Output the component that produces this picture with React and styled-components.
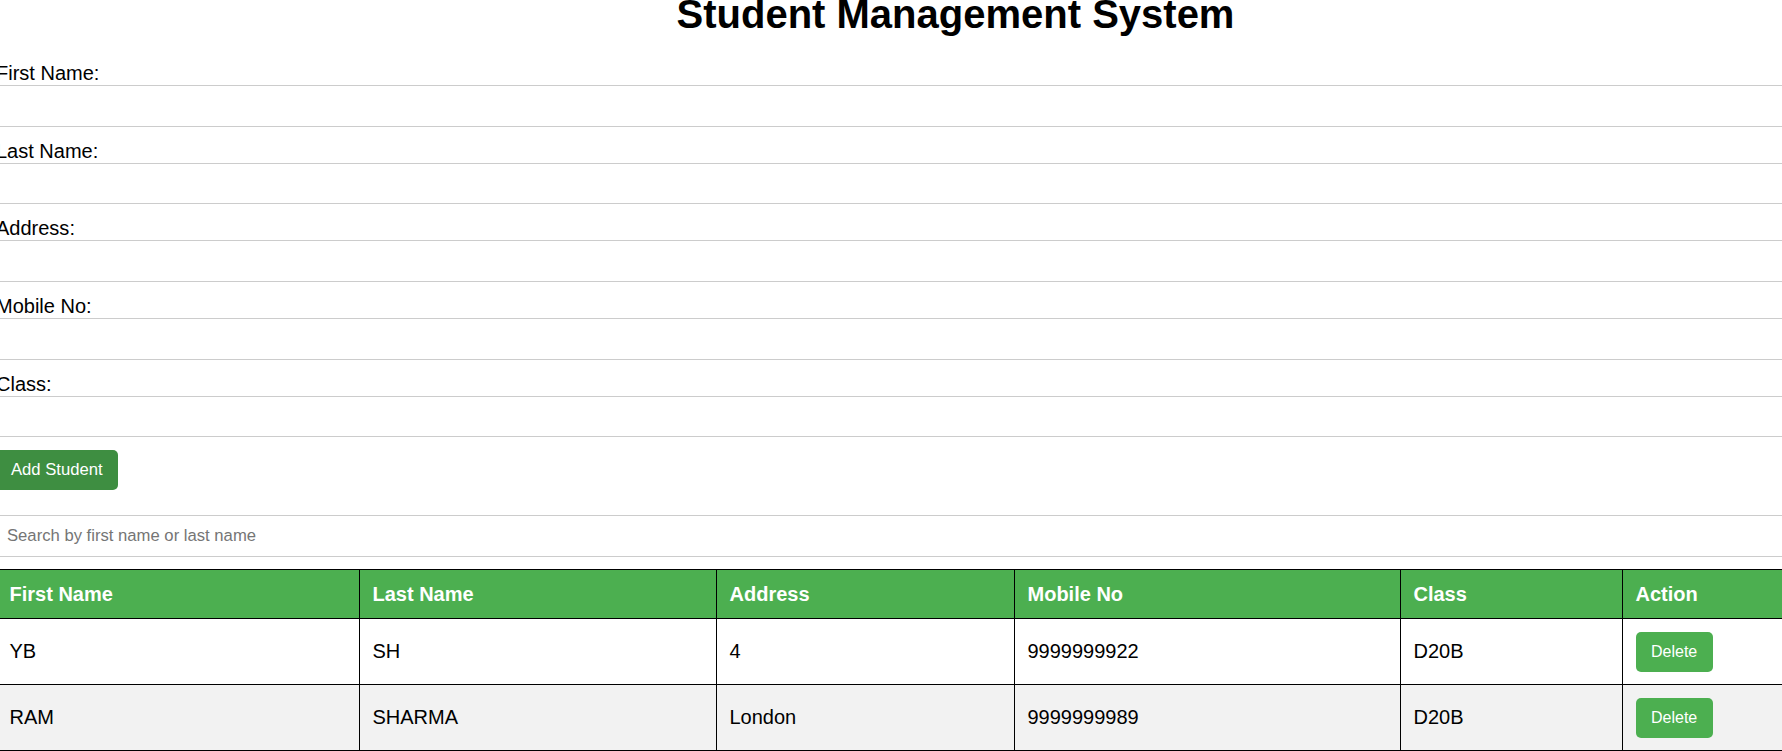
import styled, { createGlobalStyle } from 'styled-components';

const GlobalStyle = createGlobalStyle`
  html, body {
    margin: 0;
    padding: 0;
    overflow: hidden;
    background: #fff;
    font-family: "Liberation Sans", Arial, sans-serif;
  }
`;

// the captured page is a bit wider than the window and sits slightly scrolled
const Page = styled.div`
  width: 1919px;
  margin: -9px 0 0 -4px;
  color: #000;
`;

const Title = styled.h1`
  margin: 0 0 25px;
  font-size: 40px;
  line-height: 46px;
  font-weight: bold;
  text-align: center;
`;

const Form = styled.form`
  display: flex;
  flex-direction: column;
  align-items: flex-start;
`;

const Field = styled.div`
  width: 100%;
`;

const Label = styled.label`
  display: block;
  font-size: 20px;
  line-height: 23px;
`;

const Input = styled.input`
  display: block;
  box-sizing: border-box;
  width: 100%;
  height: 41.6px;
  margin: 0 0 13.1px;
  padding: 0 10px;
  border: 1px solid #ccc;
  font-family: "Liberation Sans", Arial, sans-serif;
  font-size: 16.67px;
  color: #000;
  outline: none;

  &::placeholder {
    color: #757575;
  }
`;

const Button = styled.button`
  height: 40px;
  padding: 0 ${props => (props.small ? '15.5px' : '15px')};
  border: none;
  border-radius: 5px;
  background-color: ${props => (props.small ? '#4caf50' : '#3e8e41')};
  color: #fff;
  font-family: "Liberation Sans", Arial, sans-serif;
  font-size: ${props => (props.small ? '16px' : '16.67px')};
  cursor: pointer;
`;

const SearchWrap = styled.div`
  margin: 24.5px 0 0;
`;

const Search = styled(Input)`
  margin: 0 0 12.5px;
`;

const Table = styled.table`
  width: 100%;
  border-collapse: collapse;
  table-layout: fixed;
  font-size: 20px;
  line-height: 23px;
`;

const Th = styled.th`
  padding: 12.5px;
  border: 1px solid #000;
  background-color: #4caf50;
  color: #fff;
  text-align: left;
  font-weight: bold;
`;

const Row = styled.tr`
  background-color: ${props => (props.striped ? '#f2f2f2' : '#fff')};
`;

const Td = styled.td`
  padding: 12.5px;
  border: 1px solid #000;
  vertical-align: middle;
`;

const fields = ['First Name', 'Last Name', 'Address', 'Mobile No', 'Class'];
const widths = [363, 357, 298, 386, 222, 293];

const students = [
  { first: 'YB', last: 'SH', address: '4', mobile: '9999999922', cls: 'D20B' },
  { first: 'RAM', last: 'SHARMA', address: 'London', mobile: '9999999989', cls: 'D20B' },
];

export default function App() {
  return (
    <>
      <GlobalStyle />
      <Page>
        <Title>Student Management System</Title>
        <Form onSubmit={e => e.preventDefault()}>
          {fields.map(f => (
            <Field key={f}>
              <Label>{f}:</Label>
              <Input type="text" />
            </Field>
          ))}
          <Button type="submit">Add Student</Button>
        </Form>
        <SearchWrap>
          <Search type="text" placeholder="Search by first name or last name" />
        </SearchWrap>
        <Table>
          <colgroup>
            {widths.map((w, i) => (
              <col key={i} style={{ width: w }} />
            ))}
          </colgroup>
          <thead>
            <tr>
              {[...fields, 'Action'].map(h => (
                <Th key={h}>{h}</Th>
              ))}
            </tr>
          </thead>
          <tbody>
            {students.map((s, i) => (
              <Row key={s.first} striped={i % 2 === 1}>
                <Td>{s.first}</Td>
                <Td>{s.last}</Td>
                <Td>{s.address}</Td>
                <Td>{s.mobile}</Td>
                <Td>{s.cls}</Td>
                <Td>
                  <Button small>Delete</Button>
                </Td>
              </Row>
            ))}
          </tbody>
        </Table>
      </Page>
    </>
  );
}
